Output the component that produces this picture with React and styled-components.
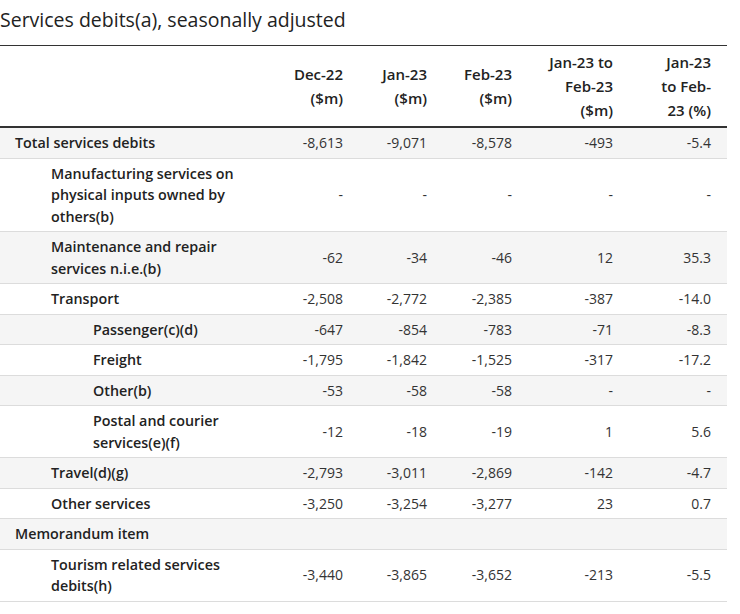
import React from 'react'
import styled, { createGlobalStyle } from 'styled-components'

const GlobalStyle = createGlobalStyle`
  body {
    margin: 0;
    background: #fff;
    font-family: "Open Sans", "Liberation Sans", sans-serif;
    color: #222;
  }
`

const Page = styled.div`
  width: 727px;
  padding-top: 8px;
`

const Title = styled.h2`
  margin: 0 0 13px 0;
  font-size: 19.5px;
  line-height: 24px;
  font-weight: 400;
  color: #222;
`

const Table = styled.table`
  width: 727px;
  border-collapse: collapse;
  table-layout: fixed;
  font-size: 14px;
  line-height: 21.5px;
  border-top: 1px solid #333;
`

const Col = styled.col`
  width: ${p => p.$w}px;
`

const HeadCell = styled.th`
  text-align: right;
  vertical-align: middle;
  font-weight: 600;
  font-size: 15px;
  color: #222;
  line-height: 24px;
  padding: 4px 16px 4px 8px;
  border-bottom: 2px solid #333;
  white-space: nowrap;
`

const Row = styled.tr`
  background: ${p => (p.$shade ? '#f5f5f5' : '#fff')};
  border-bottom: 1px solid #dcdcdc;
`

const indents = [15, 51, 93]

const Label = styled.td`
  font-weight: 600;
  font-size: 14.3px;
  color: #222;
  padding: 4px 8px 4px ${p => indents[p.$level]}px;
  vertical-align: middle;
`

const Num = styled.td`
  text-align: right;
  color: #333;
  padding: 4px 16px 4px 8px;
  vertical-align: middle;
  white-space: nowrap;
`

const widths = [275, 84, 84, 85, 101, 98]

const cols = [
  ['Dec-22', '($m)'],
  ['Jan-23', '($m)'],
  ['Feb-23', '($m)'],
  ['Jan-23 to', 'Feb-23', '($m)'],
  ['Jan-23', 'to Feb-', '23 (%)'],
]

const rows = [
  { label: 'Total services debits', level: 0, v: ['-8,613', '-9,071', '-8,578', '-493', '-5.4'] },
  { label: ['Manufacturing services on', 'physical inputs owned by', 'others(b)'], level: 1, v: ['-', '-', '-', '-', '-'] },
  { label: ['Maintenance and repair', 'services n.i.e.(b)'], level: 1, v: ['-62', '-34', '-46', '12', '35.3'] },
  { label: 'Transport', level: 1, v: ['-2,508', '-2,772', '-2,385', '-387', '-14.0'] },
  { label: 'Passenger(c)(d)', level: 2, v: ['-647', '-854', '-783', '-71', '-8.3'] },
  { label: 'Freight', level: 2, v: ['-1,795', '-1,842', '-1,525', '-317', '-17.2'] },
  { label: 'Other(b)', level: 2, v: ['-53', '-58', '-58', '-', '-'] },
  { label: ['Postal and courier', 'services(e)(f)'], level: 2, v: ['-12', '-18', '-19', '1', '5.6'] },
  { label: 'Travel(d)(g)', level: 1, v: ['-2,793', '-3,011', '-2,869', '-142', '-4.7'] },
  { label: 'Other services', level: 1, v: ['-3,250', '-3,254', '-3,277', '23', '0.7'] },
  { label: 'Memorandum item', level: 0, v: ['', '', '', '', ''] },
  { label: ['Tourism related services', 'debits(h)'], level: 1, v: ['-3,440', '-3,865', '-3,652', '-213', '-5.5'] },
]

function Lines({ parts }) {
  const list = Array.isArray(parts) ? parts : [parts]
  return list.map((t, i) => (
    <React.Fragment key={i}>
      {i > 0 && <br />}
      {t}
    </React.Fragment>
  ))
}

export default function App() {
  return (
    <Page>
      <GlobalStyle />
      <Title>Services debits(a), seasonally adjusted</Title>
      <Table>
        <colgroup>
          {widths.map((w, i) => (
            <Col key={i} $w={w} />
          ))}
        </colgroup>
        <thead>
          <tr>
            <HeadCell />
            {cols.map((c, i) => (
              <HeadCell key={i}>
                <Lines parts={c} />
              </HeadCell>
            ))}
          </tr>
        </thead>
        <tbody>
          {rows.map((r, i) => (
            <Row key={i} $shade={i % 2 === 0}>
              <Label $level={r.level}>
                <Lines parts={r.label} />
              </Label>
              {r.v.map((n, j) => (
                <Num key={j}>{n}</Num>
              ))}
            </Row>
          ))}
        </tbody>
      </Table>
    </Page>
  )
}
